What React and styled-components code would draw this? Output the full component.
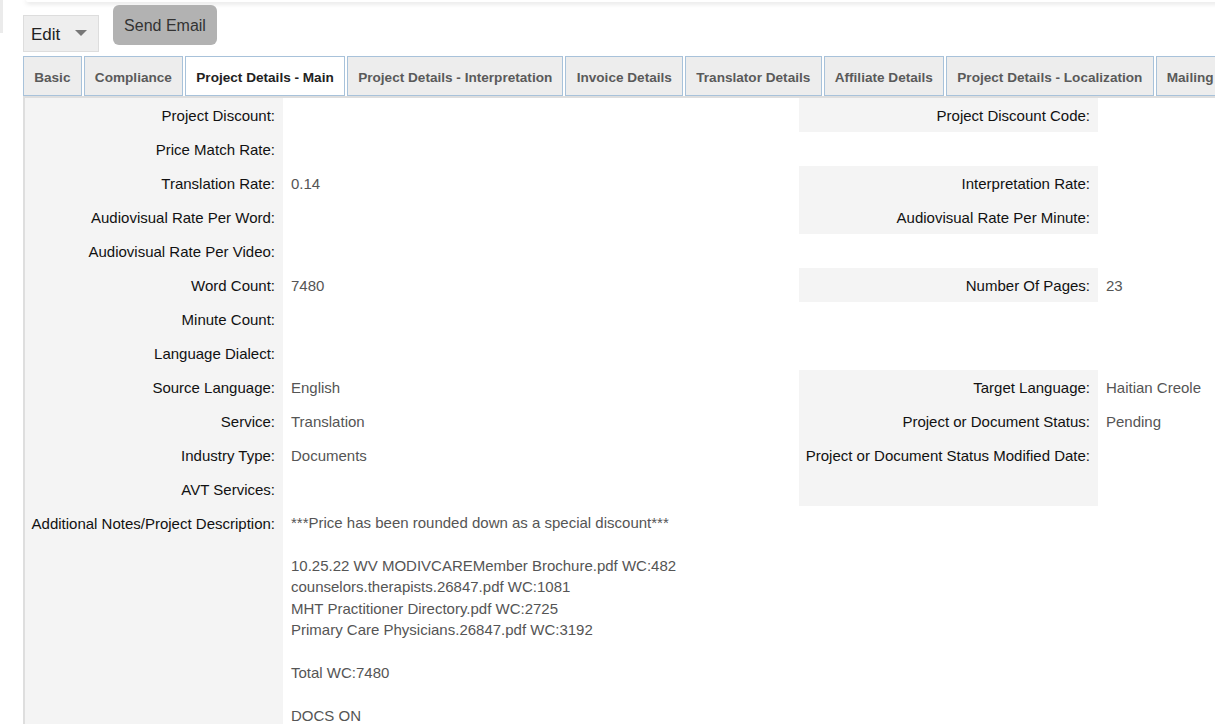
import React from "react";
import styled, { createGlobalStyle } from "styled-components";

const GlobalStyle = createGlobalStyle`
  html, body {
    margin: 0;
    padding: 0;
    background: #ffffff;
    overflow: hidden;
  }
  body {
    font-family: "Liberation Sans", Arial, Helvetica, sans-serif;
    color: #111;
  }
`;

const Page = styled.div`
  display: flex;
  align-items: flex-start;
  width: 1300px;
`;

const SideStrip = styled.div`
  flex: 0 0 3px;
  height: 33px;
  background: #ebebeb;
`;

const Main = styled.div`
  flex: 1;
  min-width: 0;
  padding-left: 20px;
`;

const TopCard = styled.div`
  height: 2px;
  margin-left: 3px;
  background: #fff;
  border-radius: 0 0 0 6px;
  box-shadow: 0 1px 5px rgba(0, 0, 0, 0.22);
`;

const Toolbar = styled.div`
  display: flex;
  align-items: flex-start;
  gap: 14px;
`;

const EditSelect = styled.div`
  box-sizing: border-box;
  margin-top: 13px;
  width: 76px;
  height: 37px;
  display: flex;
  align-items: center;
  gap: 15px;
  padding: 2px 6px 0 7px;
  background: #eeeeee;
  border: 1px solid #dddddd;
  font-size: 17px;
  color: #222;
`;

const Caret = styled.span`
  width: 0;
  height: 0;
  margin-top: -3px;
  border-left: 6px solid transparent;
  border-right: 6px solid transparent;
  border-top: 6px solid #777;
`;

const SendButton = styled.button`
  box-sizing: border-box;
  margin-top: 3px;
  width: 104px;
  height: 40px;
  padding: 2px 0 0;
  border: none;
  border-radius: 6px;
  background: #b2b2b2;
  color: #333;
  font-family: inherit;
  font-size: 16px;
`;

const TabBar = styled.div`
  display: flex;
  margin-top: 4px;
`;

const Tab = styled.div`
  box-sizing: border-box;
  flex-shrink: 0;
  height: 40px;
  line-height: 38px;
  padding: 2px 10.2px 0 10.2px;
  margin-right: 2px;
  border: 1px solid #a8c2da;
  background: ${(p) => (p.$active ? "#ffffff" : "#ededed")};
  color: ${(p) => (p.$active ? "#222" : "#5a5a5a")};
  font-weight: bold;
  font-size: 13.6px;
  white-space: nowrap;
`;

const Panel = styled.div`
  border-top: 2px solid #dedede;
  border-left: 2px solid #dedede;
`;

const Table = styled.table`
  border-collapse: collapse;
  table-layout: fixed;
  width: 1275px;
  font-size: 15px;
`;

const LabelCell = styled.td`
  box-sizing: border-box;
  height: 34px;
  padding: 9px 8px 7px 4px;
  line-height: 18px;
  vertical-align: top;
  text-align: right;
  white-space: nowrap;
  background: #f4f4f4;
  color: #111;
`;

const ValueCell = styled.td`
  box-sizing: border-box;
  height: 34px;
  padding: 9px 8px 7px;
  line-height: 18px;
  vertical-align: top;
  color: #555;
  white-space: nowrap;
`;

const NotesCell = styled.td`
  padding: 6px 8px 8px;
  line-height: 21.4px;
  vertical-align: top;
  color: #555;
  white-space: pre-line;
`;

const tabs = [
  "Basic",
  "Compliance",
  "Project Details - Main",
  "Project Details - Interpretation",
  "Invoice Details",
  "Translator Details",
  "Affiliate Details",
  "Project Details - Localization",
  "Mailing",
];

const rows = [
  { l: "Project Discount:", v: "", rl: "Project Discount Code:", rv: "" },
  { l: "Price Match Rate:", v: "" },
  { l: "Translation Rate:", v: "0.14", rl: "Interpretation Rate:", rv: "" },
  { l: "Audiovisual Rate Per Word:", v: "", rl: "Audiovisual Rate Per Minute:", rv: "" },
  { l: "Audiovisual Rate Per Video:", v: "" },
  { l: "Word Count:", v: "7480", rl: "Number Of Pages:", rv: "23" },
  { l: "Minute Count:", v: "" },
  { l: "Language Dialect:", v: "" },
  { l: "Source Language:", v: "English", rl: "Target Language:", rv: "Haitian Creole" },
  { l: "Service:", v: "Translation", rl: "Project or Document Status:", rv: "Pending" },
  { l: "Industry Type:", v: "Documents", rl: "Project or Document Status Modified Date:", rv: "" },
  { l: "AVT Services:", v: "", rl: "", rv: "" },
];

const notes = `***Price has been rounded down as a special discount***

10.25.22 WV MODIVCAREMember Brochure.pdf WC:482
counselors.therapists.26847.pdf WC:1081
MHT Practitioner Directory.pdf WC:2725
Primary Care Physicians.26847.pdf WC:3192

Total WC:7480

DOCS ON`;

export default function App() {
  return (
    <>
      <GlobalStyle />
      <Page>
        <SideStrip />
        <Main>
          <TopCard />
          <Toolbar>
            <EditSelect>
              <span>Edit</span>
              <Caret />
            </EditSelect>
            <SendButton>Send Email</SendButton>
          </Toolbar>
          <TabBar>
            {tabs.map((t) => (
              <Tab key={t} $active={t === "Project Details - Main"}>
                {t}
              </Tab>
            ))}
          </TabBar>
          <Panel>
            <Table>
              <colgroup>
                <col style={{ width: 258 }} />
                <col style={{ width: 516 }} />
                <col style={{ width: 299 }} />
                <col />
              </colgroup>
              <tbody>
                {rows.map((r) => (
                  <tr key={r.l}>
                    <LabelCell>{r.l}</LabelCell>
                    <ValueCell>{r.v}</ValueCell>
                    {r.rl !== undefined ? (
                      <>
                        <LabelCell>{r.rl}</LabelCell>
                        <ValueCell>{r.rv}</ValueCell>
                      </>
                    ) : (
                      <ValueCell colSpan={2} />
                    )}
                  </tr>
                ))}
                <tr>
                  <LabelCell>Additional Notes/Project Description:</LabelCell>
                  <NotesCell colSpan={3}>{notes}</NotesCell>
                </tr>
              </tbody>
            </Table>
          </Panel>
        </Main>
      </Page>
    </>
  );
}
